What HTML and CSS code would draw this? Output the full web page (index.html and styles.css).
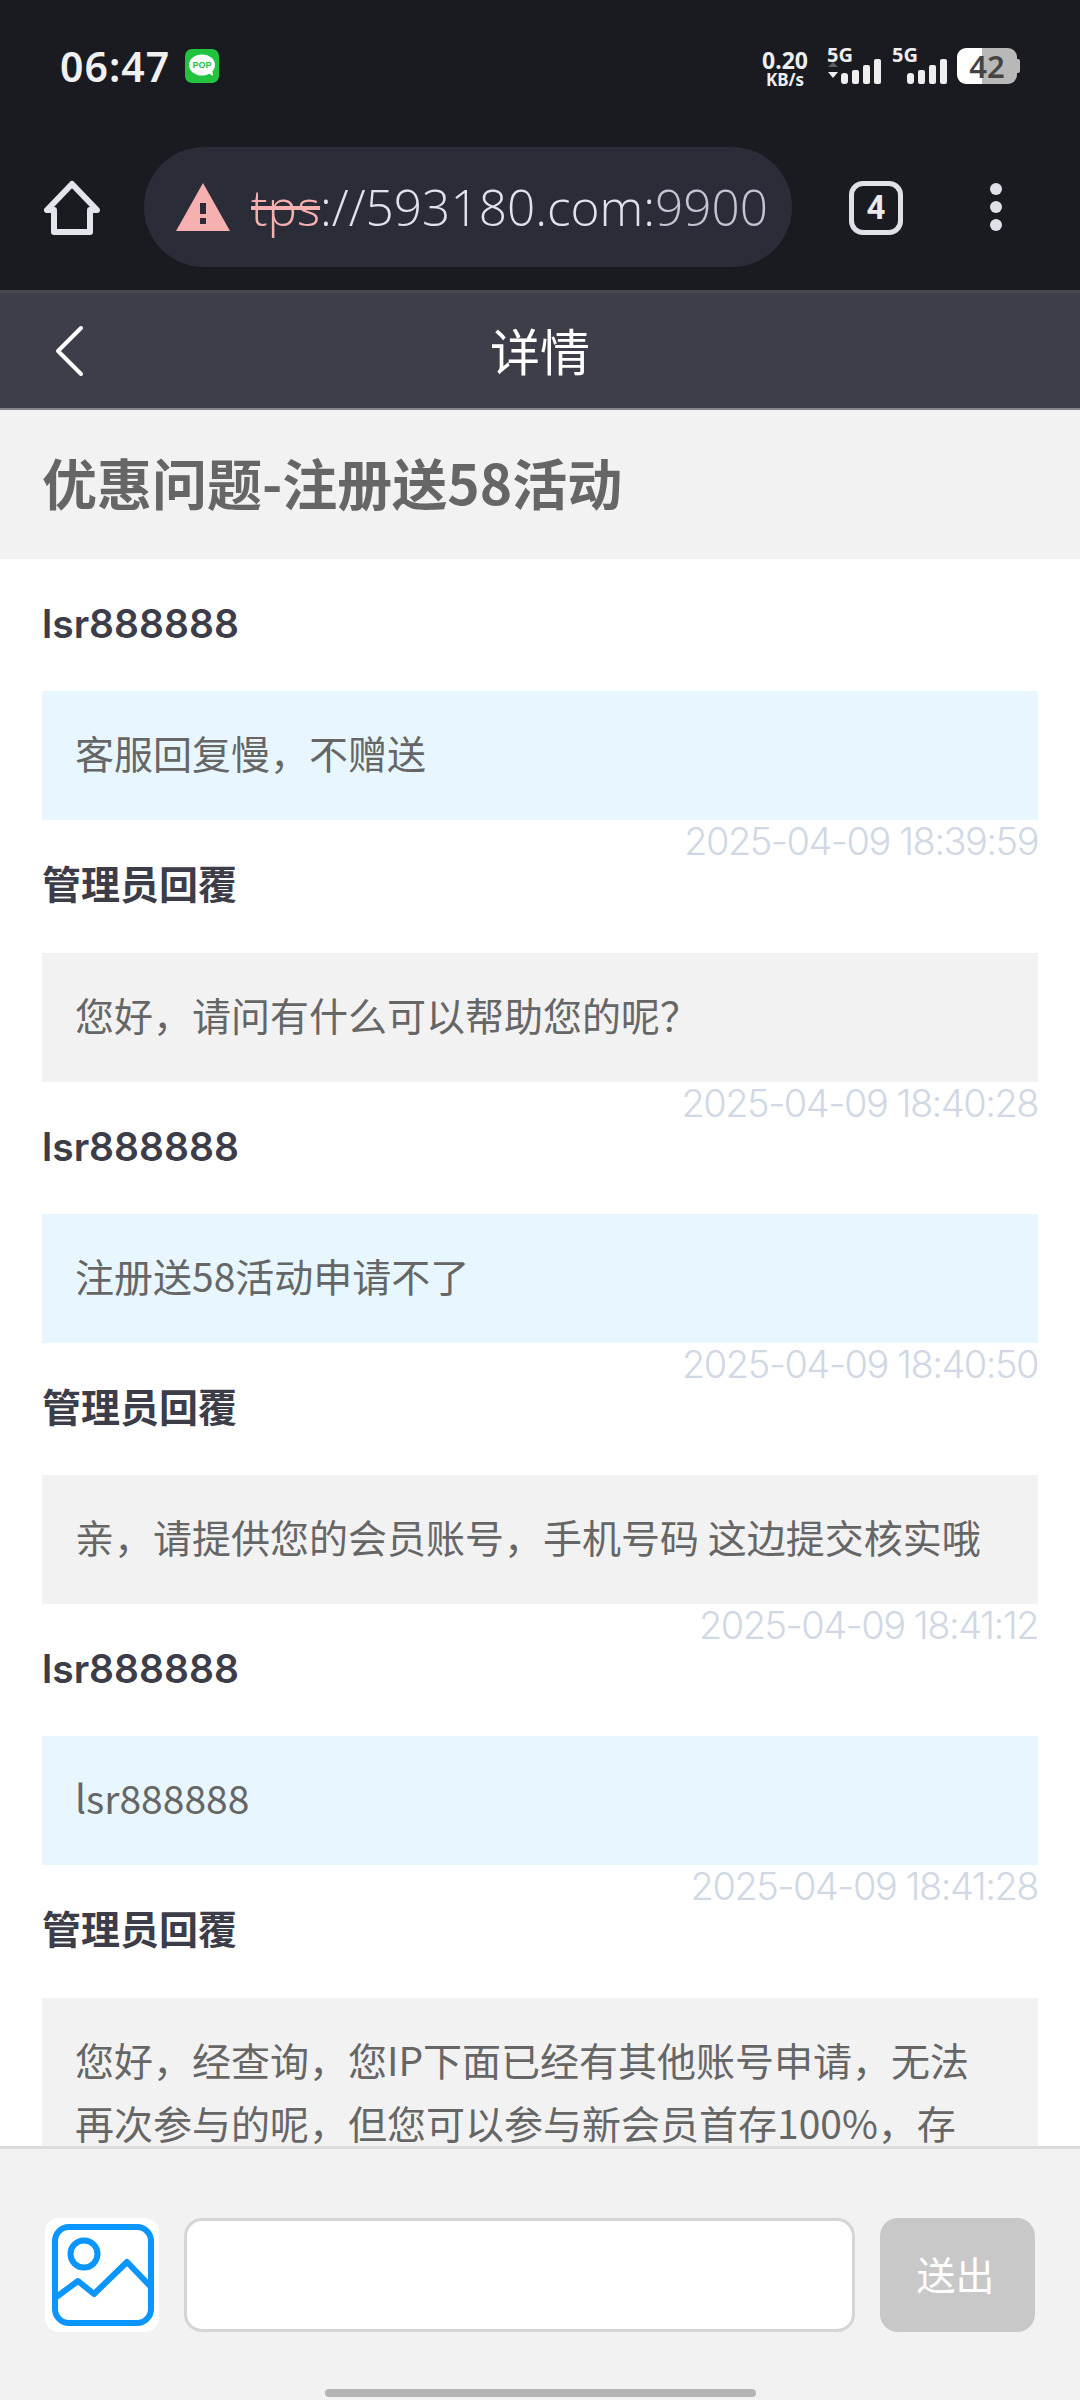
FILE: index.html

```html
<!DOCTYPE html>
<html lang="en">
<head>
    <meta charset="UTF-8">
    <meta name="viewport" content="width=device-width, initial-scale=1.0">
    <title>详情</title>
    <link rel="stylesheet" href="styles.css">
</head>
<body>
    <div class="page">
        <div class="browser-top">
            <div class="status-bar">
                <div class="status-left">
                    <span class="clock">06:47</span>
                    <div class="pop-icon">
                        <svg width="34" height="34" viewBox="0 0 34 34">
                            <ellipse cx="17" cy="16" rx="13" ry="10.5" fill="#fff"/>
                            <path d="M22 23l6 4-1-8z" fill="#fff"/>
                            <text x="17" y="19" text-anchor="middle" class="pop-text">POP</text>
                        </svg>
                    </div>
                </div>
                <div class="status-right">
                    <div class="net-speed">
                        <span class="speed-num">0.20</span>
                        <span class="speed-unit">KB/s</span>
                    </div>
                    <div class="signal">
                        <span class="signal-label">5G</span>
                        <svg width="56" height="25" viewBox="0 0 56 25">
                            <path d="M1 8l5-5 5 5z" fill="#5c5d64"/>
                            <path d="M1 13l5 6 5-6z" fill="#eee"/>
                            <rect x="14" y="14" width="7" height="11" rx="3" fill="#eee"/>
                            <rect x="25" y="11" width="7" height="14" rx="2" fill="#eee"/>
                            <rect x="36" y="6" width="7" height="19" rx="2" fill="#eee"/>
                            <rect x="47" y="0" width="7" height="25" rx="2" fill="#eee"/>
                        </svg>
                    </div>
                    <div class="signal">
                        <span class="signal-label">5G</span>
                        <svg width="56" height="25" viewBox="0 0 56 25">
                            <rect x="15" y="14" width="7" height="11" rx="3" fill="#eee"/>
                            <rect x="26" y="11" width="7" height="14" rx="2" fill="#eee"/>
                            <rect x="37" y="6" width="7" height="19" rx="2" fill="#eee"/>
                            <rect x="48" y="0" width="7" height="25" rx="2" fill="#eee"/>
                        </svg>
                    </div>
                    <div class="battery">42</div>
                </div>
            </div>
            <div class="toolbar">
                <svg class="home-icon" width="56" height="56" viewBox="0 0 56 56">
                    <path d="M28 4L3 30h7v22h36V30h7z" fill="none" stroke="#e4e4ec" stroke-width="6" stroke-linejoin="round"/>
                </svg>
                <div class="url-pill">
                    <svg class="warn-icon" width="56" height="48" viewBox="0 0 56 48">
                        <path d="M28 0L55 48H1z" fill="#f7b0b0"/>
                        <rect x="25" y="20" width="6" height="11" fill="#2a2c38"/>
                        <rect x="25" y="35" width="6" height="6" fill="#2a2c38"/>
                    </svg>
                    <div class="url-text"><span class="url-scheme">tps</span>://593180.com:<span class="url-port">9900</span></div>
                </div>
                <div class="tab-count">4</div>
                <div class="menu-dots">
                    <span></span>
                    <span></span>
                    <span></span>
                </div>
            </div>
        </div>

        <div class="nav-bar">
            <svg class="back-icon" width="30" height="52" viewBox="0 0 30 52">
                <path d="M27 3L4 26l23 23" fill="none" stroke="#fff" stroke-width="4" stroke-linecap="round" stroke-linejoin="round"/>
            </svg>
            <span class="nav-title">详情</span>
        </div>

        <h1 class="topic-title">优惠问题-注册送58活动</h1>

        <div class="chat-list">
            <div class="msg">
                <div class="msg-name">lsr888888</div>
                <div class="msg-body user">客服回复慢，不赠送</div>
                <div class="msg-time">2025-04-09 18:39:59</div>
            </div>
            <div class="msg">
                <div class="msg-name">管理员回覆</div>
                <div class="msg-body admin">您好，请问有什么可以帮助您的呢？</div>
                <div class="msg-time">2025-04-09 18:40:28</div>
            </div>
            <div class="msg">
                <div class="msg-name">lsr888888</div>
                <div class="msg-body user">注册送58活动申请不了</div>
                <div class="msg-time">2025-04-09 18:40:50</div>
            </div>
            <div class="msg">
                <div class="msg-name">管理员回覆</div>
                <div class="msg-body admin">亲，请提供您的会员账号，手机号码 这边提交核实哦</div>
                <div class="msg-time">2025-04-09 18:41:12</div>
            </div>
            <div class="msg">
                <div class="msg-name">lsr888888</div>
                <div class="msg-body user">lsr888888</div>
                <div class="msg-time">2025-04-09 18:41:28</div>
            </div>
            <div class="msg">
                <div class="msg-name">管理员回覆</div>
                <div class="msg-body admin">您好，经查询，您IP下面已经有其他账号申请，无法再次参与的呢，但您可以参与新会员首存100%，存</div>
            </div>
        </div>

        <div class="reply-bar">
            <div class="reply-row">
                <div class="pic-btn">
                    <svg width="114" height="114" viewBox="0 0 114 114">
                        <rect x="10" y="9" width="96" height="96" rx="14" fill="none" stroke="#0a95ff" stroke-width="6"/>
                        <circle cx="39" cy="36" r="13.5" fill="none" stroke="#0a95ff" stroke-width="6"/>
                        <path d="M10 80l23-17 16 13 33-32 24 25" fill="none" stroke="#0a95ff" stroke-width="6" stroke-linejoin="round"/>
                    </svg>
                </div>
                <input type="text" class="reply-input">
                <button class="send-btn">送出</button>
            </div>
            <div class="home-bar"></div>
        </div>
    </div>
</body>
</html>
```

FILE: styles.css

```css
* {
    box-sizing: border-box;
}
body {
    margin: 0;
    background-color: #fff;
    font-family: "Noto Sans CJK SC", "Noto Sans", sans-serif;
}
.page {
    width: 1080px;
    height: 2400px;
    display: flex;
    flex-direction: column;
    overflow: hidden;
}

/* phone status bar + browser toolbar */
.browser-top {
    height: 290px;
    background-color: #1a1b21;
    flex-shrink: 0;
}
.status-bar {
    height: 147px;
    padding: 48px 63px 0 60px;
    display: flex;
    justify-content: space-between;
    align-items: flex-start;
}
.status-left {
    display: flex;
    align-items: center;
    gap: 15px;
    height: 36px;
}
.clock {
    color: #f0f0f0;
    font-family: "Noto Sans", sans-serif;
    font-size: 41px;
    font-weight: 600;
    letter-spacing: 1px;
}
.pop-icon {
    width: 34px;
    height: 34px;
    background-color: #22c43f;
    border-radius: 7px;
}
.pop-text {
    fill: #22c43f;
    font-family: "Liberation Sans", sans-serif;
    font-size: 9px;
    font-weight: 700;
}
.status-right {
    display: flex;
    align-items: flex-start;
    gap: 9px;
}
.net-speed {
    display: flex;
    flex-direction: column;
    align-items: center;
    width: 52px;
    margin-right: 7px;
    color: #eee;
    font-family: "Noto Sans", sans-serif;
    font-weight: 700;
}
.speed-num {
    font-size: 23px;
    line-height: 24px;
}
.speed-unit {
    font-size: 17px;
    line-height: 16px;
}
.signal {
    display: flex;
    flex-direction: column;
    width: 56px;
}
.signal-label {
    color: #eee;
    font-family: "Noto Sans", sans-serif;
    font-size: 20px;
    font-weight: 700;
    line-height: 14px;
    height: 14px;
}
.signal svg {
    margin-top: -3px;
}
.battery {
    position: relative;
    width: 60px;
    height: 36px;
    border-radius: 9px;
    background: linear-gradient(to right, #fff 0, #fff 25px, #b8b8b8 25px);
    color: #444;
    font-family: "Noto Sans", sans-serif;
    font-size: 31px;
    font-weight: 600;
    line-height: 36px;
    text-align: center;
}
.battery::after {
    content: "";
    position: absolute;
    right: -3px;
    top: 11px;
    width: 3px;
    height: 14px;
    background-color: #b8b8b8;
    border-radius: 0 2px 2px 0;
}
.toolbar {
    display: flex;
    align-items: flex-start;
    padding-left: 44px;
}
.home-icon {
    margin-top: 33px;
}
.url-pill {
    width: 648px;
    height: 120px;
    margin-left: 44px;
    background-color: #2a2c38;
    border-radius: 60px;
    display: flex;
    align-items: center;
    padding: 0 24px 0 31px;
    overflow: hidden;
}
.warn-icon {
    flex-shrink: 0;
}
.url-text {
    margin-left: 20px;
    color: #e2e2ec;
    font-family: "Open Sans", sans-serif;
    font-size: 49.5px;
    font-weight: 300;
    white-space: nowrap;
}
.url-scheme {
    color: #f7b0b0;
    text-decoration: line-through;
}
.url-port {
    color: #c4c4d2;
}
.tab-count {
    width: 54px;
    height: 54px;
    margin: 34px 0 0 57px;
    border: 5px solid #e0e0e8;
    border-radius: 14px;
    color: #e8e8ee;
    font-family: Roboto, sans-serif;
    font-size: 33px;
    font-weight: 700;
    line-height: 44px;
    text-align: center;
}
.menu-dots {
    display: flex;
    flex-direction: column;
    gap: 6px;
    margin: 36px 0 0 87px;
}
.menu-dots span {
    width: 12px;
    height: 12px;
    border-radius: 50%;
    background-color: #e0e0e8;
}

/* page header */
.nav-bar {
    height: 120px;
    background-color: #3e3e4a;
    border-top: 3px solid #47474f;
    border-bottom: 2px solid #85858c;
    display: flex;
    align-items: center;
    justify-content: center;
    position: relative;
    flex-shrink: 0;
}
.back-icon {
    position: absolute;
    left: 54px;
    top: 32px;
}
.nav-title {
    color: #fff;
    font-size: 50px;
    line-height: 60px;
    margin-bottom: 4px;
}
.topic-title {
    margin: 0;
    height: 149px;
    padding-left: 42px;
    background-color: #f2f2f2;
    color: #666;
    font-size: 55px;
    font-weight: 700;
    line-height: 142px;
    flex-shrink: 0;
}

/* messages */
.chat-list {
    flex: 1;
    min-height: 0;
    overflow: hidden;
    padding: 42px 42px 0 42px;
}
.msg-name {
    height: 44px;
    margin-bottom: 46.3px;
    color: #3d3d4a;
    font-family: Inter, "Noto Sans CJK SC", sans-serif;
    font-size: 39px;
    font-weight: 600;
    line-height: 46px;
}
.msg-body {
    min-height: 129px;
    padding: 30px 34px 35px 33px;
    color: #666;
    font-size: 39px;
    line-height: 63px;
}
.msg-body.user {
    background-color: #e8f7ff;
}
.msg-body.admin {
    background-color: #f2f2f2;
}
.msg-time {
    height: 42px;
    color: #cfd8e4;
    font-family: Inter, sans-serif;
    font-size: 38px;
    font-weight: 300;
    letter-spacing: -1.5px;
    line-height: 42px;
    text-align: right;
}

/* reply box */
.reply-bar {
    height: 254px;
    background-color: #f2f2f2;
    border-top: 3px solid #dcdcdc;
    flex-shrink: 0;
}
.reply-row {
    display: flex;
    gap: 25px;
    padding: 69px 45px 0 45px;
}
.pic-btn {
    width: 114px;
    height: 114px;
    background-color: #fff;
    border-radius: 14px;
    flex-shrink: 0;
}
.reply-input {
    flex: 1;
    min-width: 0;
    height: 114px;
    background-color: #fff;
    border: 3px solid #d5d5d5;
    border-radius: 18px;
}
.send-btn {
    width: 155px;
    height: 114px;
    background-color: #c8c8c8;
    border: none;
    border-radius: 18px;
    color: #fff;
    font-family: "Noto Sans CJK SC", sans-serif;
    font-size: 39px;
    padding: 0 4px 4px 0;
}
.home-bar {
    width: 431px;
    height: 8px;
    margin: 57px auto 0 auto;
    background-color: #b5b5b5;
    border-radius: 4px;
}
```
